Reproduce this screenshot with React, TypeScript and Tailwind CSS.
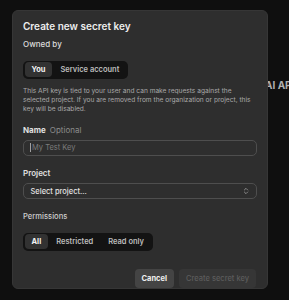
import { ChevronsUpDown } from "lucide-react";

const ownedBy = ["You", "Service account"];
const permissions = ["All", "Restricted", "Read only"];

function Segmented({ items, active }: { items: string[]; active: string }) {
  return (
    <div className="inline-flex gap-px rounded-[5px] bg-[#131313] p-[1.5px]">
      {items.map((item) => (
        <div
          key={item}
          className={
            item === active
              ? "flex h-[15px] items-center rounded-[4px] bg-[#323232] px-[7px] text-[7.5px] font-bold text-[#f2f2f2]"
              : "flex h-[15px] items-center rounded-[4px] px-[7px] text-[7.5px] font-semibold text-[#bdbdbd]"
          }
        >
          {item}
        </div>
      ))}
    </div>
  );
}

export default function App() {
  return (
    <div className="relative h-[300px] w-[289px] overflow-hidden bg-[#0f0f0f] font-['Inter',sans-serif]">
      {/* page behind the dialog */}
      <span className="absolute left-[265px] top-[78px] whitespace-nowrap text-[10px] font-bold text-[#b0b0b0]">
        AI API
      </span>

      <div className="relative z-10 ml-[12px] mt-[10px] flex h-[279px] w-[256px] flex-col rounded-[6px] border border-[#363636] bg-[#2e2e2e] px-[10px] pt-[9px]">
        <h2 className="text-[10px] font-semibold leading-[12px] text-[#ececec]">
          Create new secret key
        </h2>

        <p className="mt-[7px] text-[8px] font-medium leading-[10px] text-[#dcdcdc]">
          Owned by
        </p>
        <div className="mt-[5px]">
          <Segmented items={ownedBy} active="You" />
        </div>

        <p className="mt-[8px] text-[6.6px] leading-[9.2px] text-[#a9a9a9]">
          This API key is tied to your user and can make requests against the
          selected project. If you are removed from the organization or
          project, this key will be disabled.
        </p>

        <p className="mt-[11px] text-[8px] leading-[10px]">
          <span className="font-bold text-[#e0e0e0]">Name</span>
          <span className="ml-[4px] text-[#8c8c8c]">Optional</span>
        </p>
        <div className="mt-[4.5px] flex h-[18.5px] items-center rounded-[5px] border border-[#4e4e4e] pl-[6px]">
          <span className="mr-[1px] h-[9px] w-px bg-[#a0a0a0]" />
          <span className="text-[7.5px] text-[#7c7c7c]">My Test Key</span>
        </div>

        <p className="mt-[12px] text-[8px] font-semibold leading-[10px] text-[#e0e0e0]">
          Project
        </p>
        <div className="mt-[5px] flex h-[18.5px] items-center justify-between rounded-[5px] border border-[#4e4e4e] pl-[6.5px] pr-[6px]">
          <span className="text-[7.5px] font-medium text-[#e2e2e2]">
            Select project...
          </span>
          <ChevronsUpDown size={8} strokeWidth={2.2} className="text-[#a8a8a8]" />
        </div>

        <p className="mt-[12.5px] text-[7.6px] font-medium leading-[10px] text-[#cfcfcf]">
          Permissions
        </p>
        <div className="mt-[4.5px]">
          <Segmented items={permissions} active="All" />
        </div>

        <div className="mt-[18.5px] flex justify-end gap-[5px] pr-px">
          <button className="flex h-[18.5px] items-center rounded-[4px] bg-[#444444] px-[7px] text-[7.5px] font-bold text-[#f0f0f0]">
            Cancel
          </button>
          <button className="flex h-[18.5px] items-center rounded-[4px] bg-[#363636] px-[7px] text-[7.5px] font-medium text-[#5c5c5c]">
            Create secret key
          </button>
        </div>
      </div>
    </div>
  );
}
